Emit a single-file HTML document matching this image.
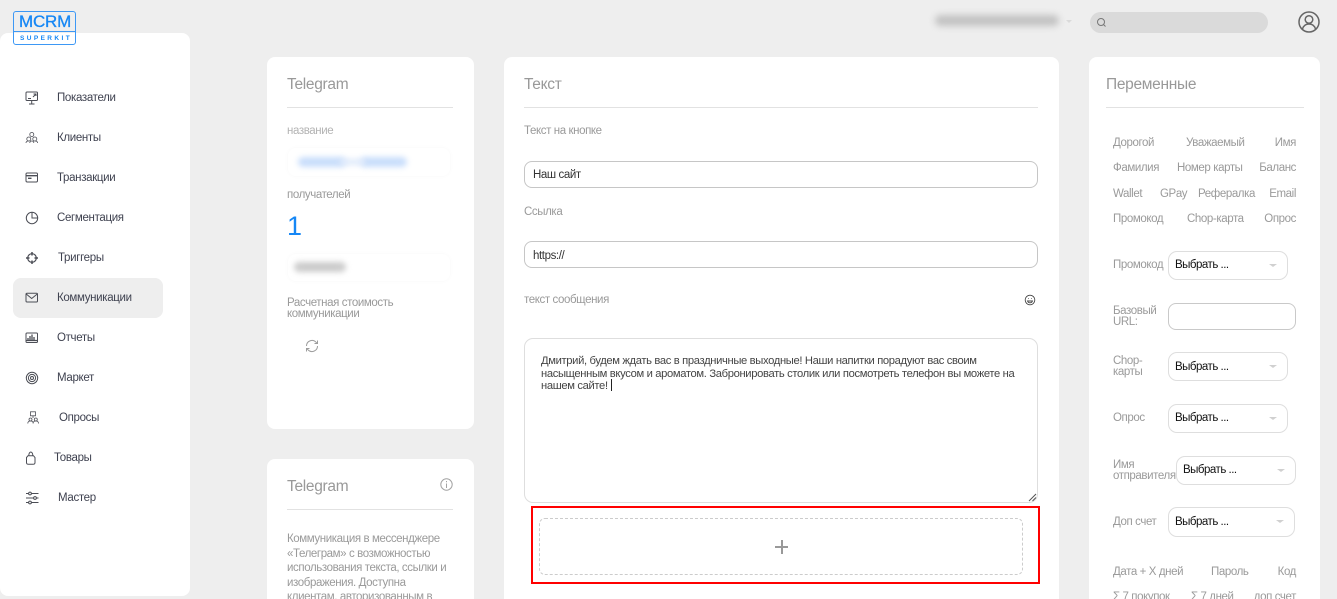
<!DOCTYPE html>
<html lang="ru"><head><meta charset="utf-8"><title>MCRM</title>
<style>
html,body{margin:0;padding:0;width:1337px;height:599px;overflow:hidden;background:#eeeeee}
body{position:relative;font-family:"Liberation Sans",sans-serif;color:#9a9a9a}
.a,.t,svg{position:absolute}
.t{white-space:nowrap;font-size:11.5px;line-height:14px;letter-spacing:-.4px;margin-top:1px}
.card{position:absolute;background:#fff;border-radius:8px}
.t.h{font-size:15.5px;line-height:20px;color:#999;letter-spacing:-.3px;margin-top:0}
.hr{position:absolute;height:1px;background:#e2e2e2}
.t.n{color:#3f4250;font-size:11.500px;letter-spacing:-.33px}
.sel{position:absolute;box-sizing:border-box;background:#fff;border:1px solid #dedede;border-radius:9px;color:#111;font-size:11.500px;letter-spacing:-.5px;line-height:26px;padding-left:6px;height:29px}
.sel:after{content:"";position:absolute;right:10px;top:12px;border-left:4px solid transparent;border-right:4px solid transparent;border-top:3.500px solid #d0d0d0}
.inp{position:absolute;box-sizing:border-box;background:#fff;border:1px solid #c6c6c6;border-radius:8px;color:#333;font-size:11.500px;letter-spacing:-.4px;line-height:27px;padding-left:8px;left:524px;width:514px;height:27px}
svg{fill:none;stroke:#4b4d55;stroke-width:1}
</style></head><body>

<div class="card" style="left:0;top:33px;width:190px;height:563px"></div>
<div class="a" style="left:13px;top:278px;width:150px;height:40px;background:#eeeeee;border-radius:8px"></div>

<div class="a" style="left:13px;top:11px;width:61px;height:32px;border:1px solid #3d98f5;border-radius:3px"></div>
<div class="a" style="left:14px;top:31px;width:61px;height:1px;background:#3d98f5"></div>
<div class="t" style="left:19px;top:13px;margin:0;font-size:17px;line-height:18px;color:#1687f5;letter-spacing:-.2px;-webkit-text-stroke:.3px #1687f5">MCRM</div>
<div class="t" style="left:20px;top:34px;margin:0;font-size:6.500px;line-height:9px;color:#1687f5;letter-spacing:2.400px;font-weight:bold">SUPERKIT</div>

<svg style="left:25px;top:91px" width="14" height="14" viewBox="0 0 14 14"><rect x="1" y="1" width="11.500" height="8.500" rx="1"/><path d="M4 13h5.500M6.700 9.500V13M3 7.500h3M8 6l2.500-2.500M8.500 3H11v2" /></svg>
<svg style="left:25px;top:131px;stroke-width:.8" width="14" height="14" viewBox="0 0 14 14"><circle cx="6.800" cy="3.500" r="2"/><circle cx="3.800" cy="8" r="2"/><circle cx="9.800" cy="8" r="2"/><path d="M1 12c0-2 1.500-2 2.700-2M12.600 12c0-2-1.500-2-2.700-2M4.800 12c0-2 1-2 2-2s2 0 2 2"/></svg>
<svg style="left:25px;top:171px" width="14" height="14" viewBox="0 0 14 14"><rect x="1" y="2" width="11.500" height="9" rx="1.200"/><path d="M1 4.700h11.500M3 7.300h3.500" stroke-width="1.300"/></svg>
<svg style="left:25px;top:211px" width="14" height="14" viewBox="0 0 14 14"><circle cx="7" cy="7" r="5.700"/><path d="M7 1.300V7H12.700"/></svg>
<svg style="left:25px;top:251px;stroke-width:1.200" width="14" height="14" viewBox="0 0 14 14"><circle cx="7" cy="7" r="4.300"/><path d="M7 1v3.500M7 9.500V13M1 7h3.500M9.500 7H13" stroke-width="1.500"/></svg>
<svg style="left:25px;top:291px" width="14" height="14" viewBox="0 0 14 14"><rect x="1" y="2.300" width="11.500" height="8.700" rx="1"/><path d="M1.200 3l5.500 4.500L12.300 3"/></svg>
<svg style="left:25px;top:331px" width="14" height="14" viewBox="0 0 14 14"><rect x="1" y="2" width="11.500" height="9.500" rx="1"/><path d="M3 9V7M5 9V5M7 9V3.500M9 9V6M1 9.500h11.500" stroke-width="1.300"/></svg>
<svg style="left:25px;top:371px" width="14" height="14" viewBox="0 0 14 14"><circle cx="7" cy="7" r="5.700"/><circle cx="7" cy="7" r="3.600"/><circle cx="7" cy="7" r="1.500"/></svg>
<svg style="left:27px;top:411px;stroke-width:.8" width="14" height="14" viewBox="0 0 14 14"><rect x="3.500" y=".8" width="5" height="4"/><circle cx="3.500" cy="8.500" r="1.500"/><circle cx="8.800" cy="8.500" r="1.500"/><path d="M6 5v2M.8 12.500c0-2 1-2.500 2.700-2.500s2.700.5 2.700 2.500M6.100 12.500c0-2 1-2.500 2.700-2.500s2.700.5 2.700 2.500"/></svg>
<svg style="left:25px;top:451px" width="14" height="14" viewBox="0 0 14 14"><path d="M1.500 6.500L3 4.700h5.500L10 6.500v5c0 1.200-.8 1.800-2 1.800H3.500c-1.200 0-2-.6-2-1.800zM3.800 4.700C3.800 2.500 4.700 1 5.800 1s2 1.500 2 3.700"/></svg>
<svg style="left:25px;top:491px" width="14" height="14" viewBox="0 0 14 14"><path d="M1 2.500h2.500M6.500 2.500h7M1 7h7.500M11.500 7h2M1 11.500h2.500M6.500 11.500h7"/><circle cx="5" cy="2.500" r="1.400"/><circle cx="10" cy="7" r="1.400"/><circle cx="5" cy="11.500" r="1.400"/></svg>

<div class="t n" style="left:57px;top:90px">Показатели</div>
<div class="t n" style="left:57px;top:130px">Клиенты</div>
<div class="t n" style="left:57px;top:170px">Транзакции</div>
<div class="t n" style="left:57px;top:210px">Сегментация</div>
<div class="t n" style="left:58px;top:250px">Триггеры</div>
<div class="t n" style="left:57px;top:290px">Коммуникации</div>
<div class="t n" style="left:57px;top:330px">Отчеты</div>
<div class="t n" style="left:57px;top:370px">Маркет</div>
<div class="t n" style="left:59px;top:410px">Опросы</div>
<div class="t n" style="left:54px;top:450px">Товары</div>
<div class="t n" style="left:58px;top:490px">Мастер</div>

<div class="a" style="left:935px;top:15px;width:124px;height:11px;background:#c2c2c2;border-radius:6px;filter:blur(3.500px)"></div>
<div class="a" style="left:1066px;top:20px;width:0;height:0;border-left:3px solid transparent;border-right:3px solid transparent;border-top:3px solid #dadada"></div>
<div class="a" style="left:1090px;top:12px;width:178px;height:21px;background:#dadada;border-radius:11px"></div>
<svg style="left:1096px;top:17px;stroke:#777" width="11" height="11" viewBox="0 0 11 11"><circle cx="5" cy="5" r="3.500"/><path d="M7.500 7.500L9.500 9.500"/></svg>
<svg style="left:1298px;top:11px;stroke:#666;stroke-width:1.500" width="22" height="22" viewBox="0 0 22 22"><circle cx="11" cy="11" r="10"/><circle cx="11" cy="8.500" r="3.800"/><path d="M4.500 18c1-3.500 3.500-5 6.500-5s5.500 1.500 6.500 5"/></svg>

<div class="card" style="left:267px;top:57px;width:207px;height:372px"></div>
<div class="t h" style="left:287px;top:75px">Telegram</div>
<div class="hr" style="left:287px;top:107px;width:166px"></div>
<div class="t" style="left:287px;top:123px;color:#b3b3b3">название</div>
<div class="a" style="left:288px;top:148px;width:162px;height:28px;border-radius:8px;box-shadow:0 0 5px #f8f8f8"></div>
<div class="a" style="left:298px;top:157px;width:48px;height:10px;background:#c9defb;border-radius:5px;filter:blur(3px)"></div>
<div class="a" style="left:360px;top:157px;width:47px;height:10px;background:#c9defb;border-radius:5px;filter:blur(3px)"></div>
<div class="a" style="left:340px;top:159px;width:25px;height:6px;background:#dfeafb;filter:blur(3px)"></div>
<div class="t" style="left:287px;top:187px">получателей</div>
<div class="t" style="left:287px;top:211px;margin:0;font-size:27px;line-height:30px;color:#1687f5;letter-spacing:0">1</div>
<div class="a" style="left:288px;top:254px;width:162px;height:27px;border-radius:8px;box-shadow:0 0 5px #f8f8f8"></div>
<div class="a" style="left:294px;top:262px;width:52px;height:10px;background:#cbcbcb;border-radius:5px;filter:blur(3px)"></div>
<div class="t" style="left:287px;top:297px;line-height:11px;white-space:normal;width:150px">Расчетная стоимость коммуникации</div>
<svg style="left:305px;top:339px;stroke:#9c9c9c" width="14" height="14" viewBox="0 0 14 14"><path d="M1.500 7a5.500 5.500 0 0 1 9.500-3.800L12.500 4.500M12.500 1.500v3h-3M12.500 7a5.500 5.500 0 0 1-9.500 3.800L1.500 9.500M1.500 12.500v-3h3"/></svg>

<div class="card" style="left:267px;top:459px;width:207px;height:160px"></div>
<div class="t h" style="left:287px;top:477px">Telegram</div>
<svg style="left:440px;top:478px;stroke:#a3a3a3" width="13" height="13" viewBox="0 0 13 13"><circle cx="6.500" cy="6.500" r="5.700"/><path d="M6.500 5.500v4.500M6.500 3v1.300"/></svg>
<div class="hr" style="left:287px;top:509px;width:166px"></div>
<div class="t" style="left:287px;top:531px;line-height:14.500px;color:#9a9a9a">Коммуникация в мессенджере<br>«Телеграм» с возможностью<br>использования текста, ссылки и<br>изображения. Доступна<br>клиентам, авторизованным в</div>

<div class="card" style="left:504px;top:57px;width:555px;height:560px"></div>
<div class="t h" style="left:524px;top:75px">Текст</div>
<div class="hr" style="left:524px;top:107px;width:514px"></div>
<div class="t" style="left:524px;top:123px">Текст на кнопке</div>
<div class="inp" style="top:161px">Наш сайт</div>
<div class="t" style="left:524px;top:204px">Ссылка</div>
<div class="inp" style="top:241px;line-height:29px">https://</div>
<div class="t" style="left:524px;top:292px">текст сообщения</div>
<svg style="left:1024px;top:294px;stroke:#444;stroke-width:.9" width="12" height="12" viewBox="0 0 12 12"><circle cx="6" cy="6" r="4.800"/><path d="M3.500 7c.5 1.300 1.500 1.800 2.500 1.800S8 8.300 8.500 7zM4.200 4.500h.6M7.200 4.500h.6"/></svg>
<div class="a" style="left:524px;top:338px;box-sizing:border-box;width:514px;height:165px;border:1px solid #dedede;border-radius:9px;background:#fff"></div>
<div class="t" style="left:541px;top:354px;line-height:12.500px;color:#444;font-size:11.200px;letter-spacing:-.34px">Дмитрий, будем ждать вас в праздничные выходные! Наши напитки порадуют вас своим<br>насыщенным вкусом и ароматом. Забронировать столик или посмотреть телефон вы можете на<br>нашем сайте!</div>
<div class="a" style="left:611px;top:379px;width:1px;height:12px;background:#222"></div>
<svg style="left:1028px;top:493px;stroke:#555" width="9" height="9" viewBox="0 0 9 9"><path d="M1 8L8 1M4.500 8L8 4.500"/></svg>
<div class="a" style="left:531px;top:506px;box-sizing:border-box;width:509px;height:78px;border:2px solid #ff0000"></div>
<div class="a" style="left:539px;top:518px;box-sizing:border-box;width:484px;height:57px;border:1px dashed #cccccc;border-radius:6px"></div>
<div class="a" style="left:775px;top:546px;width:13px;height:2px;background:#999"></div>
<div class="a" style="left:781px;top:540px;width:2px;height:14px;background:#999"></div>

<div class="card" style="left:1089px;top:57px;width:231px;height:560px"></div>
<div class="t h" style="left:1106px;top:75px">Переменные</div>
<div class="hr" style="left:1106px;top:107px;width:198px"></div>

<div class="t" style="left:1113px;top:135px">Дорогой</div>
<div class="t" style="left:1186px;top:135px">Уважаемый</div>
<div class="t" style="right:41px;top:135px">Имя</div>
<div class="t" style="left:1113px;top:160px">Фамилия</div>
<div class="t" style="left:1177px;top:160px">Номер карты</div>
<div class="t" style="right:41px;top:160px">Баланс</div>
<div class="t" style="left:1113px;top:186px">Wallet</div>
<div class="t" style="left:1160px;top:186px">GPay</div>
<div class="t" style="left:1198px;top:186px">Рефералка</div>
<div class="t" style="right:41px;top:186px">Email</div>
<div class="t" style="left:1113px;top:211px">Промокод</div>
<div class="t" style="left:1187px;top:211px">Chop-карта</div>
<div class="t" style="right:41px;top:211px">Опрос</div>

<div class="t" style="left:1113px;top:257px">Промокод</div>
<div class="sel" style="left:1168px;top:251px;width:120px">Выбрать ...</div>
<div class="t" style="left:1113px;top:305px;line-height:11px">Базовый<br>URL:</div>
<div class="a" style="left:1168px;top:303px;box-sizing:border-box;width:128px;height:27px;border:1px solid #c9c9c9;border-radius:8px"></div>
<div class="t" style="left:1113px;top:355px;line-height:11px">Chop-<br>карты</div>
<div class="sel" style="left:1168px;top:352px;width:120px;line-height:28px">Выбрать ...</div>
<div class="t" style="left:1113px;top:410px">Опрос</div>
<div class="sel" style="left:1168px;top:404px;width:120px">Выбрать ...</div>
<div class="t" style="left:1113px;top:459px;line-height:11px">Имя<br>отправителя</div>
<div class="sel" style="left:1176px;top:456px;width:120px">Выбрать ...</div>
<div class="t" style="left:1113px;top:514px">Доп счет</div>
<div class="sel" style="left:1168px;top:507px;width:127px;height:30px;line-height:28px">Выбрать ...</div>

<div class="t" style="left:1113px;top:564px">Дата + X дней</div>
<div class="t" style="left:1211px;top:564px">Пароль</div>
<div class="t" style="right:41px;top:564px">Код</div>
<div class="t" style="left:1113px;top:589px">Σ 7 покупок</div>
<div class="t" style="left:1191px;top:589px">Σ 7 дней</div>
<div class="t" style="right:41px;top:589px">доп счет</div>

</body></html>
